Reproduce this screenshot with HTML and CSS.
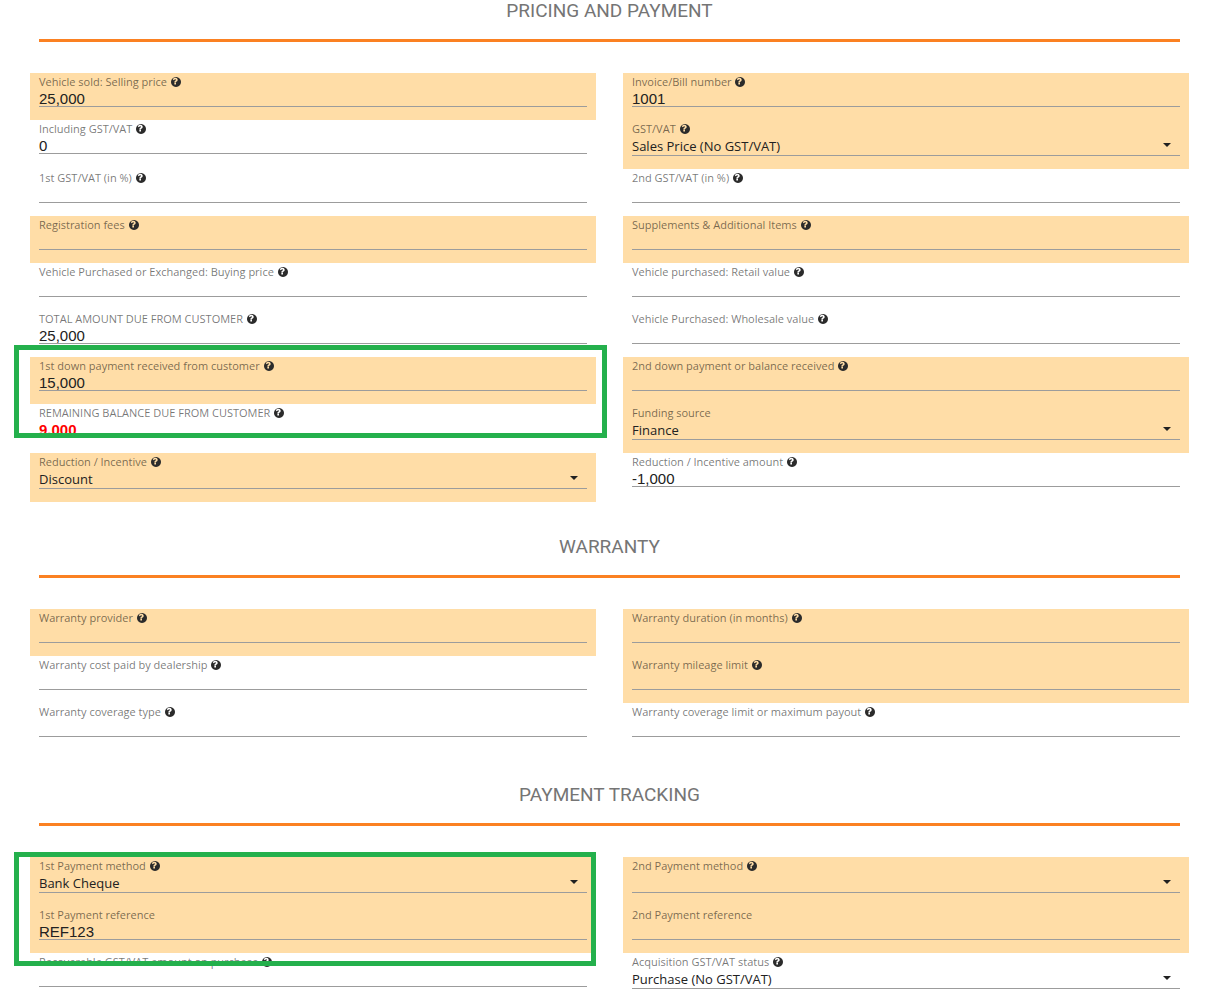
FILE: index.html
```html
<!DOCTYPE html>
<html lang="en">
<head>
<meta charset="utf-8">
<title>Pricing and payment</title>
<link rel="stylesheet" href="styles.css">
</head>
<body>
<svg class="sprite" aria-hidden="true">
  <symbol id="help" viewBox="128 128 1536 1536"><path d="M896 1248v-192q0-14-9-23t-23-9h-192q-14 0-23 9t-9 23v192q0 14 9 23t23 9h192q14 0 23-9t9-23zm256-672q0-88-55.5-163t-138.5-116-170-41q-243 0-371 213-15 24 8 42l132 100q7 6 19 6 16 0 25-12 53-68 86-92 34-24 86-24 48 0 85.5 26t37.5 59q0 38-20 61t-68 45q-63 28-115.5 86.5t-52.5 125.5v36q0 14 9 23t23 9h192q14 0 23-9t9-23q0-19 21.5-49.5t54.5-49.5q32-18 49-28.5t46-35 44.5-48 28-60.5 12.5-81zm512 320q0 209-103 385.5t-279.5 279.5-385.5 103-385.5-103-279.5-279.5-103-385.5 103-385.5 279.5-279.5 385.5-103 385.5 103 279.5 279.5 103 385.5z"/></symbol>
</svg>
<form class="sheet">
  <section class="section">
    <h2 class="section-title">PRICING AND PAYMENT</h2>
    <div class="fields">
      <div class="field marked"><label for="selling">Vehicle sold: Selling price <svg class="help"><use href="#help"/></svg></label><input id="selling" type="text" value="25,000"></div>
      <div class="field marked"><label for="invoice">Invoice/Bill number <svg class="help"><use href="#help"/></svg></label><input id="invoice" type="text" value="1001"></div>

      <div class="field"><label for="incl">Including GST/VAT <svg class="help"><use href="#help"/></svg></label><input id="incl" type="text" value="0"></div>
      <div class="field marked"><label for="gst">GST/VAT <svg class="help"><use href="#help"/></svg></label><div class="picker"><select id="gst"><option>Sales Price (No GST/VAT)</option></select></div></div>

      <div class="field"><label for="gst1">1st GST/VAT (in %) <svg class="help"><use href="#help"/></svg></label><input id="gst1" type="text"></div>
      <div class="field"><label for="gst2">2nd GST/VAT (in %) <svg class="help"><use href="#help"/></svg></label><input id="gst2" type="text"></div>

      <div class="field marked"><label for="fees">Registration fees <svg class="help"><use href="#help"/></svg></label><input id="fees" type="text"></div>
      <div class="field marked"><label for="extras">Supplements &amp; Additional Items <svg class="help"><use href="#help"/></svg></label><input id="extras" type="text"></div>

      <div class="field"><label for="buying">Vehicle Purchased or Exchanged: Buying price <svg class="help"><use href="#help"/></svg></label><input id="buying" type="text"></div>
      <div class="field"><label for="retail">Vehicle purchased: Retail value <svg class="help"><use href="#help"/></svg></label><input id="retail" type="text"></div>

      <div class="field"><label for="total">TOTAL AMOUNT DUE FROM CUSTOMER <svg class="help"><use href="#help"/></svg></label><input id="total" type="text" value="25,000"></div>
      <div class="field"><label for="wholesale">Vehicle Purchased: Wholesale value <svg class="help"><use href="#help"/></svg></label><input id="wholesale" type="text"></div>

      <div class="field marked"><label for="down1">1st down payment received from customer <svg class="help"><use href="#help"/></svg></label><input id="down1" type="text" value="15,000"></div>
      <div class="field marked"><label for="down2">2nd down payment or balance received <svg class="help"><use href="#help"/></svg></label><input id="down2" type="text"></div>

      <div class="field"><label for="balance">REMAINING BALANCE DUE FROM CUSTOMER <svg class="help"><use href="#help"/></svg></label><input id="balance" class="due" type="text" value="9,000"></div>
      <div class="field marked"><label for="funding">Funding source</label><div class="picker"><select id="funding"><option>Finance</option></select></div></div>

      <div class="field marked"><label for="reduction">Reduction / Incentive <svg class="help"><use href="#help"/></svg></label><div class="picker"><select id="reduction"><option>Discount</option></select></div></div>
      <div class="field"><label for="reduction-amount">Reduction / Incentive amount <svg class="help"><use href="#help"/></svg></label><input id="reduction-amount" type="text" value="-1,000"></div>

      <div class="outline outline-balance"></div>
    </div>
  </section>

  <section class="section">
    <h2 class="section-title">WARRANTY</h2>
    <div class="fields">
      <div class="field marked"><label for="provider">Warranty provider <svg class="help"><use href="#help"/></svg></label><input id="provider" type="text"></div>
      <div class="field marked"><label for="duration">Warranty duration (in months) <svg class="help"><use href="#help"/></svg></label><input id="duration" type="text"></div>

      <div class="field"><label for="cost">Warranty cost paid by dealership <svg class="help"><use href="#help"/></svg></label><input id="cost" type="text"></div>
      <div class="field marked"><label for="mileage">Warranty mileage limit <svg class="help"><use href="#help"/></svg></label><input id="mileage" type="text"></div>

      <div class="field"><label for="coverage">Warranty coverage type <svg class="help"><use href="#help"/></svg></label><input id="coverage" type="text"></div>
      <div class="field"><label for="payout">Warranty coverage limit or maximum payout <svg class="help"><use href="#help"/></svg></label><input id="payout" type="text"></div>
    </div>
  </section>

  <section class="section">
    <h2 class="section-title">PAYMENT TRACKING</h2>
    <div class="fields">
      <div class="field marked"><label for="method1">1st Payment method <svg class="help"><use href="#help"/></svg></label><div class="picker"><select id="method1"><option>Bank Cheque</option></select></div></div>
      <div class="field marked"><label for="method2">2nd Payment method <svg class="help"><use href="#help"/></svg></label><div class="picker"><select id="method2"><option></option></select></div></div>

      <div class="field marked"><label for="ref1">1st Payment reference</label><input id="ref1" type="text" value="REF123"></div>
      <div class="field marked"><label for="ref2">2nd Payment reference</label><input id="ref2" type="text"></div>

      <div class="field last"><label for="recoverable">Recoverable GST/VAT amount on purchase <svg class="help"><use href="#help"/></svg></label><input id="recoverable" type="text"></div>
      <div class="field last"><label for="status">Acquisition GST/VAT status <svg class="help"><use href="#help"/></svg></label><div class="picker"><select id="status"><option>Purchase (No GST/VAT)</option></select></div></div>

      <div class="outline outline-payment"></div>
    </div>
  </section>
</form>
</body>
</html>
```
FILE: styles.css
```css
* { box-sizing: border-box; }

body {
  margin: 0;
  background: #fff;
  font-family: "Open Sans", sans-serif;
  color: #212121;
}

.sprite { display: none; }

.sheet { padding: 1px 24px 0 30px; }

.section + .section { margin-top: 35px; }

.section-title {
  margin: 0 9px 31px;
  padding-bottom: 18px;
  border-bottom: 3px solid #fb8122;
  font: 400 19px/20px Roboto, sans-serif;
  color: #757575;
  text-align: center;
}

.fields {
  position: relative;
  display: grid;
  grid-template-columns: 1fr 1fr;
  column-gap: 27px;
}

.field {
  display: flex;
  flex-direction: column;
  min-width: 0;
  padding: 0 9px 13px;
}

.field.last { padding-bottom: 4px; }

.marked { background: #ffdda7; }

label {
  font-size: 11px;
  line-height: 18px;
  color: rgba(0, 0, 0, 0.54);
  white-space: nowrap;
}

.help {
  width: 10px;
  height: 10px;
  margin-left: 1px;
  vertical-align: -1px;
  fill: #2b2b2b;
}

input,
select {
  display: block;
  width: 100%;
  margin: 0;
  padding: 0 0 1px;
  border: 0;
  border-bottom: 1px solid #9c9c9c;
  border-radius: 0;
  outline: 0;
  background: none;
  color: #212121;
}

input {
  height: 16px;
  font: 15px/14px "Liberation Sans", Arial, sans-serif;
}

select {
  height: 18px;
  appearance: none;
  font: 13px/16px "Open Sans", sans-serif;
}

.due {
  font-weight: 700;
  color: #f00;
}

.picker { position: relative; }

.picker::after {
  content: "";
  position: absolute;
  top: 5px;
  right: 9px;
  border: 4px solid transparent;
  border-top-color: #212121;
  border-bottom: 0;
  pointer-events: none;
}

.outline {
  position: absolute;
  border: 5px solid #24b04c;
  pointer-events: none;
}

.outline-balance {
  grid-area: 7 / 1 / 9 / 2;
  inset: -12px -11px 15px -16px;
}

.outline-payment {
  grid-area: 1 / 1 / 3 / 2;
  inset: -5px 0 -13px -16px;
}
```
